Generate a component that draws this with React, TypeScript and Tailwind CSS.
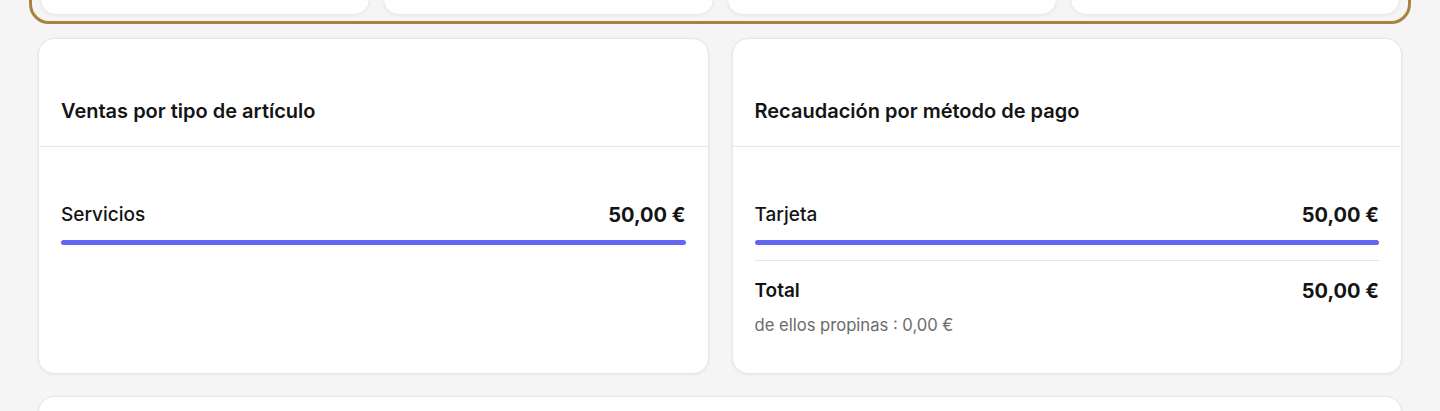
import React from 'react';

const font = { fontFamily: 'Inter, "Noto Sans", sans-serif' };

const Card: React.FC<{ title: string; children: React.ReactNode }> = ({ title, children }) => (
  <div className="bg-white rounded-2xl border border-[#e6e6e6] shadow-[0_1px_3px_rgba(0,0,0,0.06)] flex flex-col">
    <div className="px-[22px] pt-[58px] pb-[21px] border-b border-[#e8e8e8]">
      <h2 className="text-[20px] leading-7 font-semibold text-[#141414]">{title}</h2>
    </div>
    <div className="px-[22px] pt-[54px] pb-[36px]">{children}</div>
  </div>
);

const BarRow: React.FC<{ label: string; value: string }> = ({ label, value }) => (
  <div>
    <div className="flex items-center justify-between">
      <span className="text-[19px] leading-7 font-medium text-[#141414]">{label}</span>
      <span className="text-[20px] leading-7 font-bold text-[#141414]">{value}</span>
    </div>
    <div className="mt-[11px] h-[5px] rounded-full bg-[#6366f1]" />
  </div>
);

export default function App() {
  return (
    <div className="min-h-screen bg-[#f5f5f5] overflow-hidden" style={font}>
      <div className="px-[38px] flex flex-col">
        <div className="-mt-[90px] -mx-[9px] border-[3px] border-[#a8823f] rounded-[20px] px-2 pt-2 pb-1.5">
          <div className="grid grid-cols-4 gap-[13px]">
            {[0, 1, 2, 3].map(i => (
              <div key={i} className="h-[94px] bg-white rounded-2xl border border-[#ececec] shadow-[0_1px_3px_rgba(0,0,0,0.06)]" />
            ))}
          </div>
        </div>

        <div className="mt-[14px] grid grid-cols-2 gap-[23px]">
          <Card title="Ventas por tipo de artículo">
            <BarRow label="Servicios" value="50,00 €" />
          </Card>
          <Card title="Recaudación por método de pago">
            <BarRow label="Tarjeta" value="50,00 €" />
            <div className="mt-[15px] border-t border-[#e6e6e6] pt-4">
              <div className="flex items-center justify-between">
                <span className="text-[19px] leading-7 font-semibold text-[#141414]">Total</span>
                <span className="text-[20px] leading-7 font-bold text-[#141414]">50,00 €</span>
              </div>
              <p className="mt-[8px] text-[16.6px] leading-6 text-[#6b6b6b]">de ellos propinas : 0,00 €</p>
            </div>
          </Card>
        </div>

        <div className="mt-[22px] h-[120px] bg-white rounded-2xl border border-[#e6e6e6] shadow-[0_1px_3px_rgba(0,0,0,0.06)]" />
      </div>
    </div>
  );
}
